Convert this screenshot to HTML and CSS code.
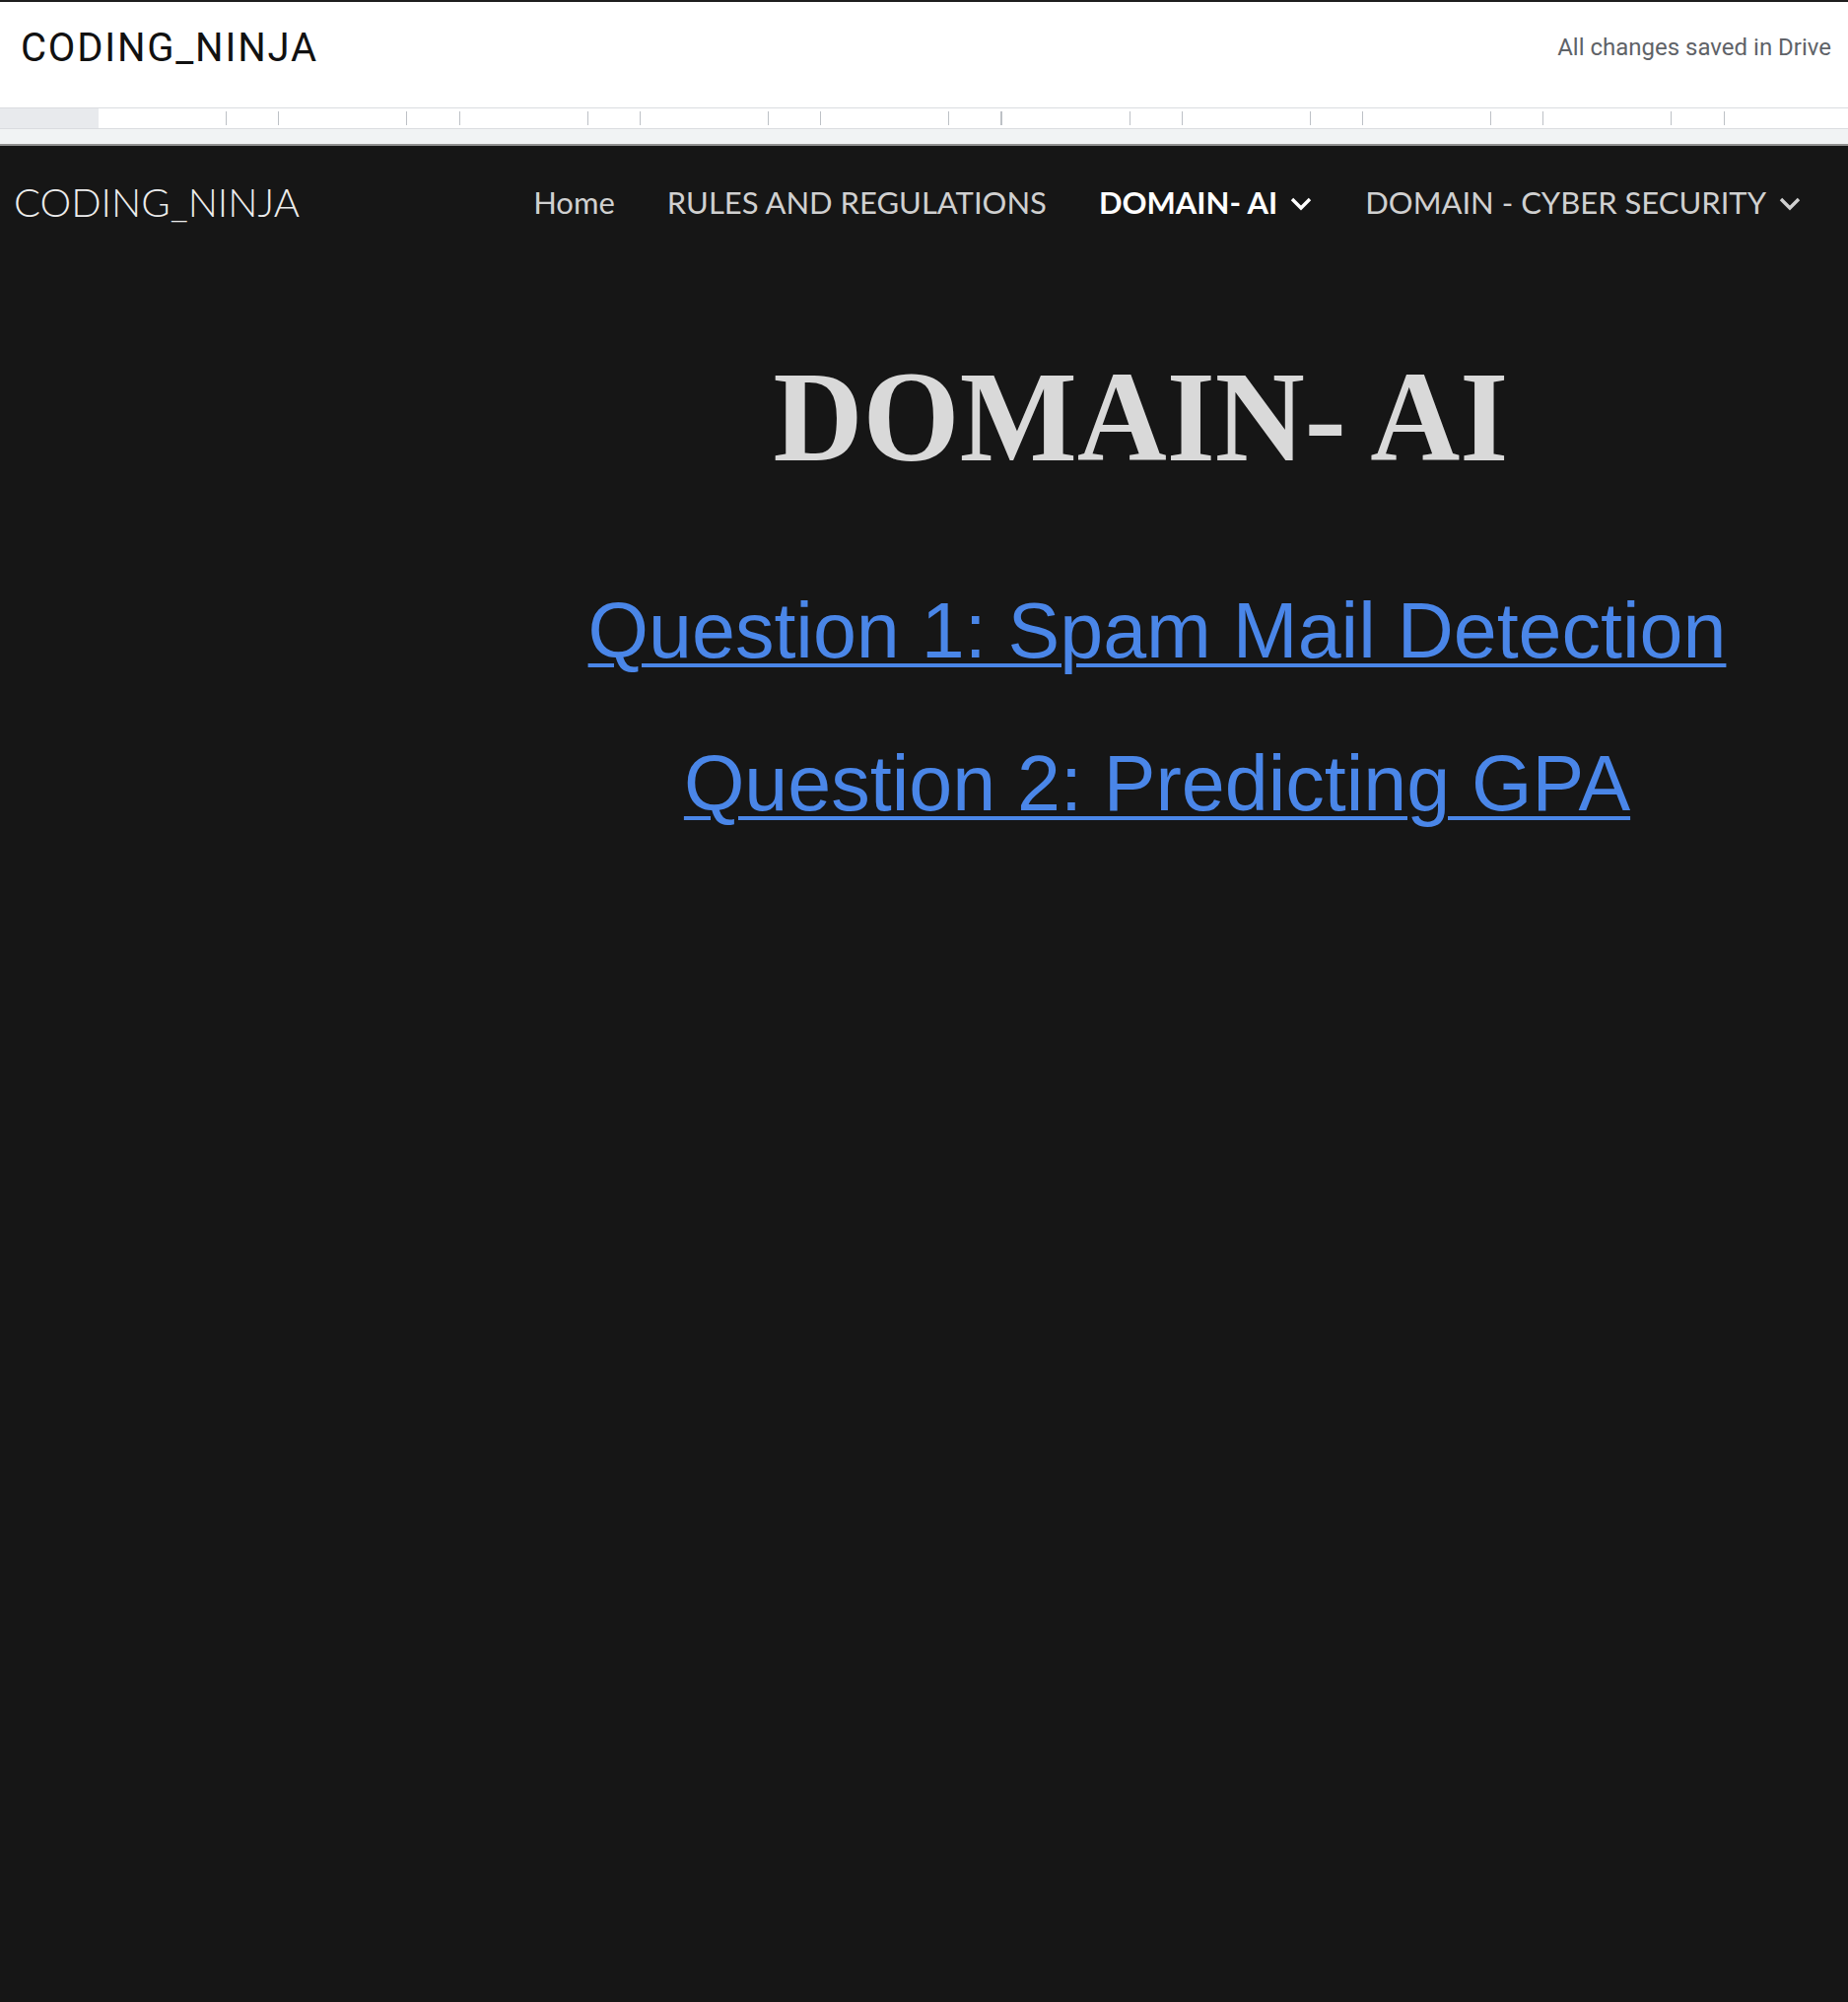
FILE: index.html
```html
<!DOCTYPE html>
<html lang="en">
<head>
<meta charset="utf-8">
<title>DOMAIN- AI - CODING_NINJA</title>
<link rel="stylesheet" href="styles.css">
</head>
<body>
<header class="editor-bar">
  <div class="doc-title">CODING_NINJA</div>
  <div class="drive-status">All changes saved in Drive</div>
</header>
<div class="ruler"><div class="ruler-margin"></div><div class="ruler-scale"></div></div>
<div class="ruler-gutter"></div>
<div class="site">
  <nav class="site-nav">
    <div class="site-logo">CODING_NINJA</div>
    <ul class="nav-list">
      <li class="nav-item">Home</li>
      <li class="nav-item">RULES AND REGULATIONS</li>
      <li class="nav-item active">DOMAIN- AI <svg class="chev" viewBox="0 0 24 16" width="24" height="16"><path d="M3 3 L12 12 L21 3" fill="none" stroke="currentColor" stroke-width="3.4"/></svg></li>
      <li class="nav-item">DOMAIN - CYBER SECURITY <svg class="chev" viewBox="0 0 24 16" width="24" height="16"><path d="M3 3 L12 12 L21 3" fill="none" stroke="currentColor" stroke-width="3.4"/></svg></li>
    </ul>
  </nav>
  <main class="content">
    <h1 class="page-title">DOMAIN- AI</h1>
    <a class="q-link first" href="#">Question 1: Spam Mail Detection</a>
    <a class="q-link" href="#">Question 2: Predicting GPA</a>
  </main>
</div>
</body>
</html>
```

FILE: styles.css
```css
* { box-sizing: border-box; }
html, body { margin: 0; padding: 0; }
body {
  background: #161616;
  min-height: 2031px;
  font-family: "Lato", "Liberation Sans", sans-serif;
}
.editor-bar {
  background: #ffffff;
  border-top: 2px solid #1e1e1e;
  height: 109px;
  display: flex;
  justify-content: space-between;
  align-items: flex-start;
  padding: 27px 17px 0 21px;
}
.doc-title {
  font-family: "Roboto", "Liberation Sans", sans-serif;
  font-size: 40px;
  letter-spacing: 1.8px;
  line-height: 1;
  color: #111;
}
.drive-status {
  font-family: "Roboto", "Liberation Sans", sans-serif;
  font-size: 24px;
  line-height: 1;
  color: #5f6368;
  margin-top: 7px;
}
.ruler {
  display: flex;
  height: 22px;
  border-top: 1px solid #dadce0;
  border-bottom: 1px solid #dadce0;
  background: #ffffff;
}
.ruler-margin {
  width: 100px;
  background: #e8eaed;
}
.ruler-scale {
  flex: 1;
  background-image: repeating-linear-gradient(to right,
    #bdc1c6 0 1px, transparent 1px 130px,
    #bdc1c6 130px 131px, transparent 131px 183.3px);
  background-size: 100% 14px;
  background-position: -1px center;
  background-repeat: no-repeat;
}
.ruler-gutter {
  height: 17px;
  background: #f1f3f4;
  border-bottom: 2px solid #8f8f8f;
}
.site-nav {
  height: 114px;
  display: flex;
  align-items: center;
  justify-content: space-between;
  padding: 0 47px 0 14px;
}
.site-logo {
  font-weight: 300;
  font-size: 40px;
  color: #ececec;
}
.nav-list {
  list-style: none;
  margin: 0;
  padding: 0;
  display: flex;
  align-items: center;
  gap: 53px;
}
.nav-item {
  font-size: 31px;
  color: #d0d0d0;
  display: flex;
  align-items: center;
  gap: 12px;
}
.nav-item.active {
  font-weight: 700;
  color: #ffffff;
}
.chev { display: block; margin-top: 3px; }
.content {
  margin-left: 473px;
  display: flex;
  flex-direction: column;
  align-items: center;
}
.page-title {
  font-family: "Liberation Serif", "Times New Roman", serif;
  font-weight: 700;
  font-size: 132px;
  line-height: 1;
  color: #d9d9d9;
  margin: 95px 34px 0 0;
  transform: scaleX(0.955);
}
.q-link {
  font-family: "Liberation Sans", Arial, sans-serif;
  font-size: 79px;
  line-height: 1;
  color: #4a86e8;
  text-decoration: underline;
  text-decoration-thickness: 4px;
  text-underline-offset: 6px;
  margin-top: 76px;
}
.q-link.first { margin-top: 111px; }
```
